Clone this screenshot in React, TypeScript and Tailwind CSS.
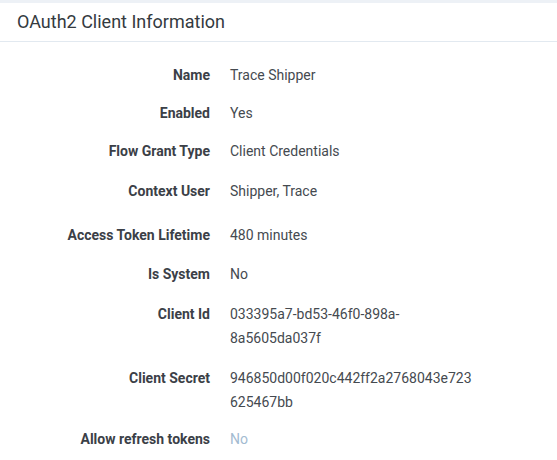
import React from "react";

type Row = { label: string; lines: string[]; mt: string; muted?: boolean };

const rows: Row[] = [
  { label: "Name", lines: ["Trace Shipper"], mt: "mt-0" },
  { label: "Enabled", lines: ["Yes"], mt: "mt-[14px]" },
  { label: "Flow Grant Type", lines: ["Client Credentials"], mt: "mt-[14px]" },
  { label: "Context User", lines: ["Shipper, Trace"], mt: "mt-[16px]" },
  { label: "Access Token Lifetime", lines: ["480 minutes"], mt: "mt-[20px]" },
  { label: "Is System", lines: ["No"], mt: "mt-[15px]" },
  { label: "Client Id", lines: ["033395a7-bd53-46f0-898a-", "8a5605da037f"], mt: "mt-[16px]" },
  { label: "Client Secret", lines: ["946850d00f020c442ff2a2768043e723", "625467bb"], mt: "mt-[16px]" },
  { label: "Allow refresh tokens", lines: ["No"], mt: "mt-[13px]", muted: true },
];

export default function App() {
  return (
    <div
      className="w-[557px] h-[460px] bg-white overflow-hidden"
      style={{ fontFamily: "Roboto, 'Noto Sans', sans-serif" }}
    >
      <div className="h-[3px] bg-[#edf1f6]" />
      <div className="h-[39px] border-b border-[#e2e9f0] flex items-center pl-[17px]">
        <h2 className="text-[18px] leading-[24px] text-[#343a40] font-normal pb-[1px]">
          OAuth2 Client Information
        </h2>
      </div>
      <div className="pt-[21px] flex flex-col">
        {rows.map((r) => (
          <div key={r.label} className={`flex gap-[20px] ${r.mt}`}>
            <div className="w-[210px] shrink-0 text-right text-[14px] leading-[24px] font-bold text-[#3b4047]">
              {r.label}
            </div>
            <div
              className={`text-[14px] leading-[24px] ${
                r.muted ? "text-[#a3bbd1]" : "text-[#454a50]"
              }`}
            >
              {r.lines.map((l) => (
                <div key={l}>{l}</div>
              ))}
            </div>
          </div>
        ))}
      </div>
    </div>
  );
}
